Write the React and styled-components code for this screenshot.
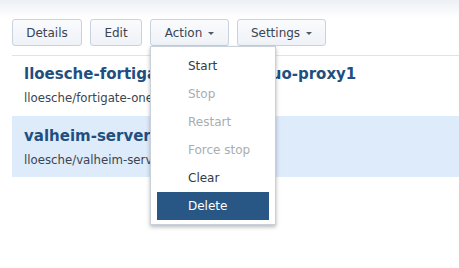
import React from "react";
import styled, { createGlobalStyle } from "styled-components";

const GlobalStyle = createGlobalStyle`
  html, body { margin: 0; padding: 0; background: #fff; }
  body { font-family: "DejaVu Sans", Verdana, sans-serif; }
`;

const Page = styled.div`
  position: relative;
  width: 459px;
  height: 268px;
  overflow: hidden;
  background: linear-gradient(to bottom, #edf0f4 0px, #ffffff 18px) no-repeat;
`;

const Toolbar = styled.div`
  display: flex;
  gap: 8px;
  padding: 19px 12px 0;
  height: 27px;
`;

const Button = styled.button`
  display: flex;
  align-items: center;
  justify-content: center;
  gap: 6px;
  width: ${(p) => p.$w}px;
  height: 27px;
  padding: 0;
  border: 1px solid #c9d3de;
  border-radius: 3px;
  background: linear-gradient(to bottom, #fafbfd, #eef2f7);
  color: #3b4451;
  font-family: inherit;
  font-size: 12px;
  line-height: 1;
  box-sizing: border-box;
`;

const Caret = styled.span`
  width: 0;
  height: 0;
  border-left: 3.5px solid transparent;
  border-right: 3.5px solid transparent;
  border-top: 3.5px solid #505a66;
  margin-top: 1px;
`;

const Separator = styled.div`
  margin: 9px 0 0 12px;
  border-top: 1px solid #dde4ec;
`;

const List = styled.div`
  padding-left: 12px;
`;

const Row = styled.div`
  height: ${(p) => p.$h}px;
  padding: ${(p) => p.$pt}px 12px 0;
  box-sizing: border-box;
  background: ${(p) => (p.$selected ? "#deebfa" : "transparent")};
  white-space: nowrap;
`;

const Title = styled.div`
  font-weight: bold;
  font-size: 15px;
  color: #1f4f80;
  line-height: 18px;
`;

const Subtitle = styled.div`
  font-size: 11.75px;
  color: #3c4450;
  line-height: 16px;
  margin-top: 7px;
`;

const Menu = styled.div`
  position: absolute;
  left: 150px;
  top: 46px;
  width: 126px;
  padding: 5px 6px 4px;
  box-sizing: border-box;
  background: #fff;
  border: 1px solid #c8d0da;
  box-shadow: 0 2px 4px rgba(0, 0, 0, 0.28);
  display: flex;
  flex-direction: column;
`;

const Item = styled.div`
  height: 28px;
  display: flex;
  align-items: center;
  padding-left: 31px;
  font-size: 12px;
  color: ${(p) => (p.$active ? "#ffffff" : p.$disabled ? "#a9adb3" : "#333a44")};
  background: ${(p) => (p.$active ? "#285785" : "transparent")};
`;

const items = [
  { label: "Start" },
  { label: "Stop", disabled: true },
  { label: "Restart", disabled: true },
  { label: "Force stop", disabled: true },
  { label: "Clear" },
  { label: "Delete", active: true },
];

export default function App() {
  return (
    <Page>
      <GlobalStyle />
      <Toolbar>
        <Button $w={70}>Details</Button>
        <Button $w={52}>Edit</Button>
        <Button $w={79}>
          Action <Caret />
        </Button>
        <Button $w={89}>
          Settings <Caret />
        </Button>
      </Toolbar>
      <Separator />
      <List>
        <Row $h={60} $pt={9}>
          <Title>lloesche-fortigate-onelogin-duo-proxy1</Title>
          <Subtitle>lloesche/fortigate-onelogin-duo-proxy</Subtitle>
        </Row>
        <Row $h={61} $pt={11} $selected>
          <Title>valheim-server</Title>
          <Subtitle>lloesche/valheim-server</Subtitle>
        </Row>
      </List>
      <Menu>
        {items.map((it) => (
          <Item key={it.label} $disabled={it.disabled} $active={it.active}>
            {it.label}
          </Item>
        ))}
      </Menu>
    </Page>
  );
}
